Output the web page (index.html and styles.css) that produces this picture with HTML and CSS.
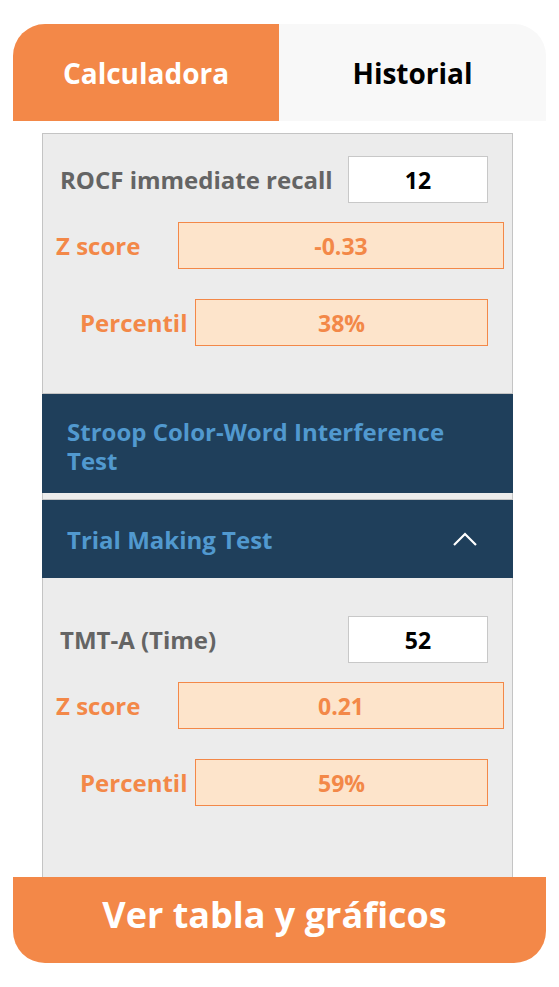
FILE: index.html
```html
<!DOCTYPE html>
<html lang="es">
<head>
<meta charset="utf-8">
<title>Calculadora</title>
<link rel="stylesheet" href="styles.css">
</head>
<body>
<div class="app">
  <div class="tabs">
    <div class="tab tab-active">Calculadora</div>
    <div class="tab tab-idle">Historial</div>
  </div>
  <div class="panel">
    <div class="group group-first">
      <div class="row row-input">
        <span class="label label-grey">ROCF immediate recall</span>
        <div class="input">12</div>
      </div>
      <div class="row row-z">
        <span class="label label-orange">Z score</span>
        <div class="result result-z">-0.33</div>
      </div>
      <div class="row row-p">
        <span class="label label-orange">Percentil</span>
        <div class="result result-p">38%</div>
      </div>
    </div>
    <div class="section-head head-stroop">
      <span class="head-title">Stroop Color-Word Interference Test</span>
    </div>
    <div class="section-head head-trial">
      <span class="head-title">Trial Making Test</span>
      <svg class="chev" width="26" height="16" viewBox="0 0 26 16"><path d="M2 14 L13 3 L24 14" fill="none" stroke="#ffffff" stroke-width="2.2"/></svg>
    </div>
    <div class="group group-second">
      <div class="row row-input">
        <span class="label label-grey">TMT-A (Time)</span>
        <div class="input">52</div>
      </div>
      <div class="row row-z">
        <span class="label label-orange">Z score</span>
        <div class="result result-z">0.21</div>
      </div>
      <div class="row row-p">
        <span class="label label-orange">Percentil</span>
        <div class="result result-p">59%</div>
      </div>
    </div>
  </div>
  <div class="cta">Ver tabla y gráficos</div>
</div>
</body>
</html>
```
FILE: styles.css
```css
* { box-sizing: border-box; }
html, body {
  margin: 0;
  padding: 0;
  background: #ffffff;
  font-family: "Open Sans", "Noto Sans", sans-serif;
  font-weight: 700;
}
.app {
  width: 533px;
  margin: 24px 0 0 13px;
}
.tabs {
  display: flex;
  height: 97px;
}
.tab {
  display: flex;
  align-items: center;
  justify-content: center;
  font-size: 28px;
}
.tab-active {
  width: 266px;
  background: #f38848;
  color: #ffffff;
  border-top-left-radius: 32px;
}
.tab-idle {
  flex: 1;
  background: #f8f8f8;
  color: #000000;
  border-top-right-radius: 32px;
}
.panel {
  margin: 12px 0 0 29px;
  width: 471px;
  height: 744px;
  background: #ececec;
  border: 1px solid #c4c4c4;
  border-bottom: none;
  display: flex;
  flex-direction: column;
}
.group-first {
  padding: 22px 0 0;
  height: 260px;
  flex-shrink: 0;
  border-bottom: 1px solid #c4c4c4;
}
.group-second {
  padding: 38px 0 0;
}
.row {
  display: flex;
  align-items: center;
  height: 47px;
}
.row-z { margin-top: 19px; }
.row-p { margin-top: 30px; }
.label { font-size: 24px; }
.label-grey { color: #646464; }
.label-orange { color: #f38848; }
.row-input { padding: 0 24px 0 17px; }
.row-z { padding: 0 8px 0 13px; }
.row-p { padding: 0 24px 0 37px; }
.input {
  margin-left: auto;
  width: 140px;
  height: 47px;
  background: #ffffff;
  border: 1px solid #c8c8c8;
  display: flex;
  align-items: center;
  justify-content: center;
  color: #000000;
  font-size: 23px;
}
.result {
  margin-left: auto;
  height: 47px;
  background: #fde4cb;
  border: 1px solid #f38848;
  display: flex;
  align-items: center;
  justify-content: center;
  color: #f38848;
  font-size: 23px;
}
.result-z { width: 326px; }
.result-p { width: 293px; }
.section-head {
  background: #1f3f5b;
  color: #5199cf;
  font-size: 24px;
  line-height: 29px;
  display: flex;
  align-items: center;
  margin: 0 -1px;
  padding: 0 40px 0 25px;
  position: relative;
  flex-shrink: 0;
}
.head-stroop {
  height: 99px;
  padding-top: 14px;
  padding-bottom: 10px;
}
.head-trial {
  height: 78px;
  margin-top: 7px;
  padding-top: 0;
}
.head-stroop::after {
  content: "";
  position: absolute;
  left: 0;
  right: 0;
  bottom: -7px;
  height: 1px;
  background: #c4c4c4;
}
.chev {
  position: absolute;
  right: 35px;
  top: 31px;
}
.cta {
  height: 86px;
  background: #f38848;
  color: #ffffff;
  font-size: 36px;
  display: flex;
  align-items: center;
  justify-content: center;
  padding: 0 10px 12px 0;
  border-bottom-left-radius: 32px;
  border-bottom-right-radius: 32px;
}
```
